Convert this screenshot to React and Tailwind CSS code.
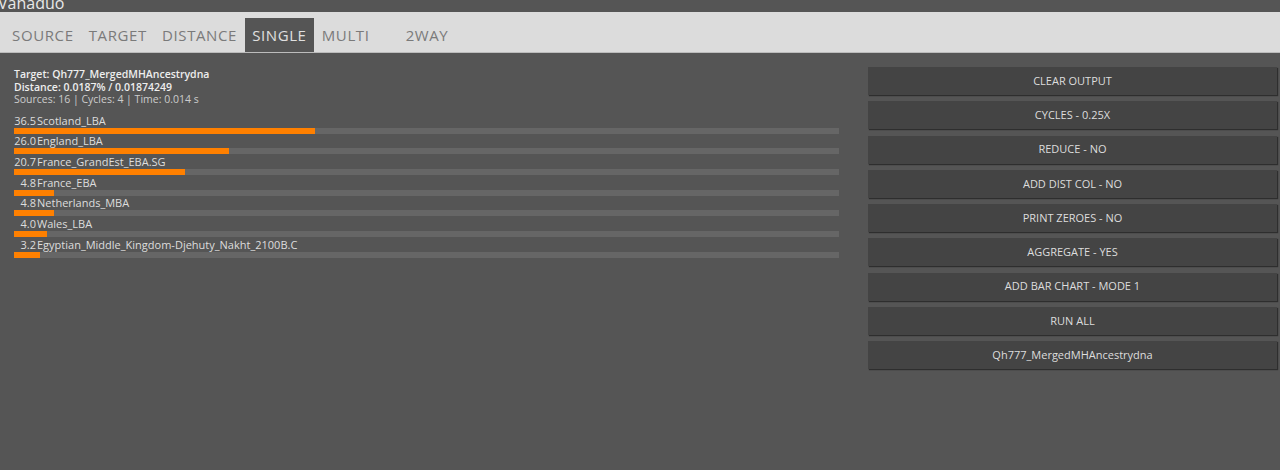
const sources = [
  { pct: 36.5, name: 'Scotland_LBA' },
  { pct: 26.0, name: 'England_LBA' },
  { pct: 20.7, name: 'France_GrandEst_EBA.SG' },
  { pct: 4.8, name: 'France_EBA' },
  { pct: 4.8, name: 'Netherlands_MBA' },
  { pct: 4.0, name: 'Wales_LBA' },
  { pct: 3.2, name: 'Egyptian_Middle_Kingdom-Djehuty_Nakht_2100B.C' },
];

const tabs = ['SOURCE', 'TARGET', 'DISTANCE', 'SINGLE', 'MULTI', '2WAY'];

const buttons = [
  'CLEAR OUTPUT',
  'CYCLES - 0.25X',
  'REDUCE - NO',
  'ADD DIST COL - NO',
  'PRINT ZEROES - NO',
  'AGGREGATE - YES',
  'ADD BAR CHART - MODE 1',
  'RUN ALL',
  'Qh777_MergedMHAncestrydna',
];

const font = { fontFamily: '"Open Sans", "DejaVu Sans", sans-serif' };

export default function App() {
  return (
    <div className="min-h-[470px] bg-[#555555] text-[#dddddd]" style={font}>
      <div className="h-[12px] overflow-hidden">
        <div className="text-[16px] leading-[16px] -mt-[5px] -ml-[2px] text-[#e8e8e8]">Vahaduo</div>
      </div>

      <div className="h-[41px] bg-[#dcdcdc] border-b border-[#bcbcbc] flex items-end pl-[4.5px]">
        {tabs.map((t) => (
          <div
            key={t}
            className={
              'h-[34px] flex items-center px-[7.6px] text-[15px] tracking-[0.6px] ' +
              (t === 'SINGLE' ? 'bg-[#555555] text-[#e0e0e0]' : 'text-[#7a7a7a]') +
              (t === '2WAY' ? ' ml-[21px]' : '')
            }
          >
            {t}
          </div>
        ))}
      </div>

      <div className="flex pt-[15px] pl-[14px] pr-[3px] gap-[29px]">
        <div className="w-[825px]">
          <div className="text-[10.5px] leading-[12.5px]">
            <div className="font-semibold text-[#eeeeee]">Target: Qh777_MergedMHAncestrydna</div>
            <div className="font-semibold text-[#eeeeee]">Distance: 0.0187% / 0.01874249</div>
            <div className="text-[#cccccc]">Sources: 16 | Cycles: 4 | Time: 0.014 s</div>
          </div>
          <div className="mt-[8px]">
            {sources.map((s) => (
              <div key={s.name} className="h-[20.7px]">
                <div className="text-[11px] leading-[13px] flex text-[#dddddd]">
                  <span className="w-[22px] text-right">{s.pct.toFixed(1)}</span>
                  <span className="ml-[1px]">{s.name}</span>
                </div>
                <div className="h-[6px] mt-[1px] bg-[#666666]">
                  <div className="h-full bg-[#ff8000]" style={{ width: s.pct + '%' }} />
                </div>
              </div>
            ))}
          </div>
        </div>

        <div className="flex-1 flex flex-col gap-[6.25px] -mt-[1px]">
          {buttons.map((b) => (
            <button
              key={b}
              className="h-[28px] bg-[#444444] text-[#dddddd] text-[11px] shadow-[1px_1px_1px_#2e2e2e]"
              style={font}
            >
              {b}
            </button>
          ))}
        </div>
      </div>
    </div>
  );
}
